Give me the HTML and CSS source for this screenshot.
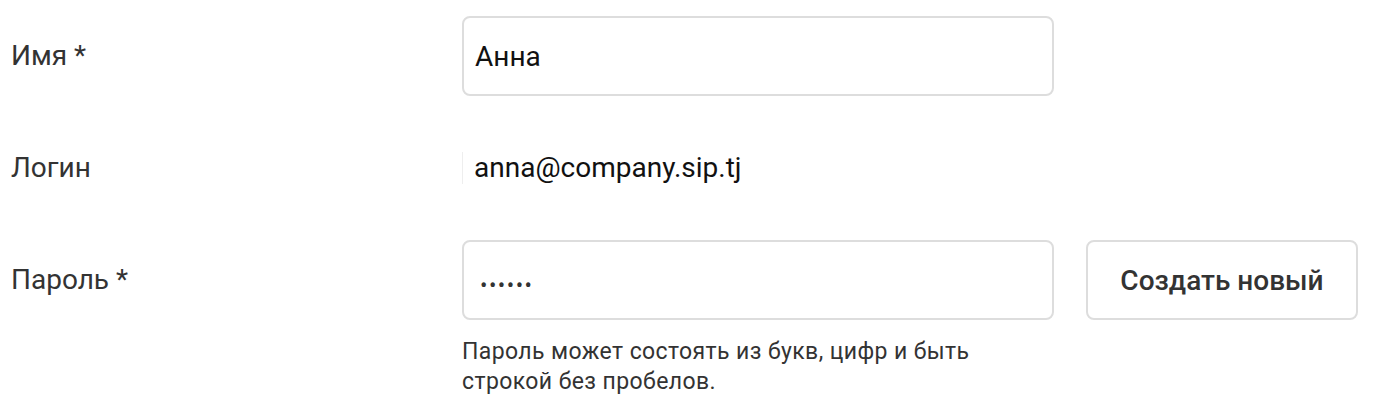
FILE: index.html
```html
<!DOCTYPE html>
<html lang="ru">
<head>
<meta charset="utf-8">
<link rel="stylesheet" href="styles.css">
</head>
<body>
<form class="form">
  <div class="row">
    <label class="label">Имя *</label>
    <div class="field">
      <div class="input">Анна</div>
    </div>
  </div>
  <div class="row">
    <label class="label">Логин</label>
    <div class="field">
      <span class="static">anna@company.sip.tj</span>
    </div>
  </div>
  <div class="row row-top">
    <label class="label label-pass">Пароль *</label>
    <div class="field field-col">
      <div class="inline">
        <div class="input input-pass">••••••</div>
        <button type="button" class="btn">Создать новый</button>
      </div>
      <p class="help">Пароль может состоять из букв, цифр и быть строкой без пробелов.</p>
    </div>
  </div>
</form>
</body>
</html>
```

FILE: styles.css
```css
* { box-sizing: border-box; }
html, body { margin: 0; padding: 0; background: #fff; }
body {
  font-family: Roboto, "Liberation Sans", Arial, sans-serif;
  color: #333;
}
.form {
  display: flex;
  flex-direction: column;
  gap: 32px;
  padding: 16px 0 0 11px;
}
.row {
  display: grid;
  grid-template-columns: 451px 1fr;
  align-items: center;
  min-height: 80px;
}
.row-top { align-items: start; }
.label {
  font-size: 28px;
  line-height: 32px;
  color: #333;
}
.label-pass { margin-top: 24px; }
.field { display: flex; align-items: center; }
.field-col { flex-direction: column; align-items: flex-start; }
.inline { display: flex; gap: 32px; }
.input {
  width: 592px;
  height: 80px;
  border: 2px solid #ddd;
  border-radius: 8px;
  padding: 0 11px;
  display: flex;
  align-items: center;
  font-size: 28px;
  color: #111;
}
.input-pass {
  font-size: 22px;
  letter-spacing: 1.5px;
  padding: 10px 0 0 16px;
  color: #333;
}
.static {
  font-size: 28px;
  line-height: 32px;
  color: #111;
  border-left: 1px solid #eee;
  padding-left: 11px;
}
.btn {
  width: 272px;
  height: 80px;
  border: 2px solid #ddd;
  border-radius: 8px;
  background: #fff;
  font-family: inherit;
  font-size: 28px;
  font-weight: 500;
  color: #333;
  cursor: pointer;
}
.help {
  margin: 17px 0 0;
  max-width: 560px;
  font-size: 23px;
  letter-spacing: 0.4px;
  line-height: 30px;
  color: #333;
}
```
